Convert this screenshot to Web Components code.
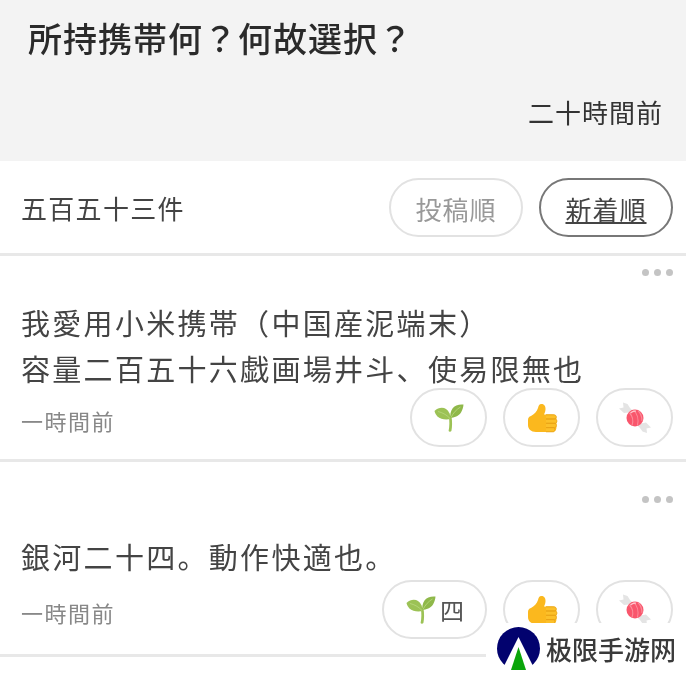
<!DOCTYPE html>
<html lang="ja">
<head>
<meta charset="utf-8">
<title>所持携帯何？何故選択？</title>
<style>
	html, body{
		margin: 0;
		background-color: white;
		font-family: "Noto Sans CJK JP", "Noto Sans", sans-serif;
		color: #333;
	}
	body{
		height: 673px;
		overflow: hidden;
		position: relative;
		filter: blur(0.4px);
	}
</style>
</head>
<body>
<question-head time="二十時間前">所持携帯何？何故選択？</question-head>
<sort-bar count="五百五十三件">
	<pill-button>投稿順</pill-button>
	<pill-button active>新着順</pill-button>
</sort-bar>
<answer-card time="一時間前" style="--top: 13px; --text-gap: 23px; --foot-gap: -3px; --bottom: 12px;">
	我愛用小米携帯（中国産泥端末）<br>容量二百五十六戯画場井斗、使易限無也
	<reaction-button slot="reactions" icon="sprout"></reaction-button>
	<reaction-button slot="reactions" icon="thumb"></reaction-button>
	<reaction-button slot="reactions" icon="candy"></reaction-button>
</answer-card>
<answer-card time="一時間前" style="--top: 34px; --text-gap: 30px; --foot-gap: 1px; --bottom: 15px;">
	銀河二十四。動作快適也。
	<reaction-button slot="reactions" icon="sprout" count="四"></reaction-button>
	<reaction-button slot="reactions" icon="thumb"></reaction-button>
	<reaction-button slot="reactions" icon="candy"></reaction-button>
</answer-card>
<site-badge>极限手游网</site-badge>

<script>
const ICONS = {
	sprout: `<svg width="32" height="30" viewBox="-1 -1 32 30">
		<path d="M14.6 27 C15.6 22 15.6 17 14.8 12.5 L17.4 12 C18.4 17 18.2 23 17.4 27 C16.8 28 15 28 14.6 27 Z" fill="#9cc255"/>
		<path d="M0.5 7 C4 3.5 9 3 12 5 C15 7 16.5 11 17 15 C12 16 6.5 15.5 3.5 12.5 C2 11 1 9 0.5 7 Z" fill="#9cc255"/>
		<path d="M29.5 0.5 C25 0 20.5 1.5 18.5 4.5 C16.5 7.5 16 11 16.4 14 C20 13.5 25 12 27 8.5 C28.5 6 29.3 3 29.5 0.5 Z" fill="#8fb84a"/>
		<path d="M4 7.5 C8 8.5 12.5 10.5 16 14.5 M26.5 3 C23 5 19 9 17 13.5" stroke="#b5d67a" stroke-width="0.9" fill="none"/>
	</svg>`,
	thumb: `<svg width="32" height="30" viewBox="-1 -1 32 30">
		<path d="M1 16 C1 14 2 12.5 4 12 C7 10.5 10 7.5 11 4 C11.5 2 12 0 14.5 0 C17.5 0 18.8 2.5 18.5 5.5 C18.3 7.5 17.8 9 17 10.5 L25 10.5 C28 10.5 29.5 12 29.5 14 L29.5 23 C29.5 26 28 28 25 28 L9 28 C4 28 1 25 1 21 Z" fill="#fbb81e"/>
		<path d="M19 10.8 L27 10.8 C30 10.8 30 15 27 15 L19 15 M19 15 L28 15 C30.5 15 30.5 19.3 28 19.3 L19 19.3 M19 19.3 L27.5 19.3 C30 19.3 30 23.6 27.5 23.6 L19 23.6 M19 23.6 L26 23.6 C28.5 23.6 28.5 27.8 26 27.8 L19 27.8" stroke="#e8a215" stroke-width="0.8" fill="#fcc02a"/>
	</svg>`,
	candy: `<svg width="34" height="32" viewBox="0 0 34 32">
		<path d="M11 10.5 L6 11 L1 6.5 L5.5 5.5 L5 0.5 L9.5 2 L12 6 L14.5 8.5 Z" fill="#e4e4e4"/>
		<path d="M23 21.5 L28 20.5 L33 25.5 L28.5 26.5 L29 31 L24.5 29.5 L22 26 L19.5 23.5 Z" fill="#e4e4e4"/>
		<circle cx="17" cy="16" r="8.5" fill="#f9566c"/>
		<path d="M11.5 11 C14.5 14 15.5 19 14 23.5 M15.5 8 C19 11 21 17 19.5 23.5 M20 8.5 C22.5 11 24 15 24 19" stroke="#fb8c9a" stroke-width="1.1" fill="none"/>
		<path d="M12.5 11 C14 9.5 16 9 18 9.2" stroke="#ffc4cc" stroke-width="1.2" fill="none"/>
	</svg>`
};

class QuestionHead extends HTMLElement {
	constructor() {
		super();
		this.attachShadow({ mode: 'open' });
		this.shadowRoot.innerHTML = `
			<style>
				:host{
					display: block;
					box-sizing: border-box;
					height: 161px;
					padding: 13px 23px 0 28px;
					background-color: #f3f3f3;
				}
				h1{
					margin: 0;
					font-size: 34px;
					line-height: 50px;
					font-weight: 500;
					letter-spacing: 1px;
					color: #2a2a2a;
				}
				.time{
					margin-top: 29px;
					text-align: right;
					font-size: 26px;
					line-height: 40px;
					letter-spacing: 1px;
					color: #333;
				}
			</style>
			<h1><slot></slot></h1>
			<div class='time'>${this.getAttribute('time')}</div>
		`;
	}
}

class SortBar extends HTMLElement {
	constructor() {
		super();
		this.attachShadow({ mode: 'open' });
		this.shadowRoot.innerHTML = `
			<style>
				:host{
					display: flex;
					box-sizing: border-box;
					height: 95px;
					align-items: flex-start;
					padding: 17px 13px 0 21px;
					border-bottom: 3px solid #e8e8e8;
				}
				.count{
					flex: 1;
					font-size: 26px;
					line-height: 60px;
					letter-spacing: 1.3px;
					color: #444;
				}
				.buttons{
					display: flex;
					gap: 16px;
				}
			</style>
			<div class='count'>${this.getAttribute('count')}</div>
			<div class='buttons'><slot></slot></div>
		`;
	}
}

class PillButton extends HTMLElement {
	constructor() {
		super();
		this.attachShadow({ mode: 'open' });
		this.shadowRoot.innerHTML = `
			<style>
				:host{
					display: block;
					box-sizing: border-box;
					width: 134px;
					height: 59px;
					border: 2px solid #e2e2e2;
					border-radius: 30px;
					text-align: center;
					font-size: 26px;
					line-height: 57px;
					letter-spacing: 1px;
					color: #999;
				}
				:host([active]){
					border-color: #777;
					color: #444;
					text-decoration: underline;
					text-underline-offset: 2px;
				}
			</style>
			<slot></slot>
		`;
	}
}

class AnswerCard extends HTMLElement {
	constructor() {
		super();
		this.attachShadow({ mode: 'open' });
		this.shadowRoot.innerHTML = `
			<style>
				:host{
					display: block;
					box-sizing: border-box;
					padding: var(--top) 13px var(--bottom) 21px;
					border-bottom: 3px solid #e8e8e8;
				}
				.dots{
					display: flex;
					justify-content: flex-end;
					gap: 5px;
				}
				.dots i{
					width: 7px;
					height: 7px;
					border-radius: 50%;
					background-color: #c4c4c4;
				}
				.text{
					margin-top: var(--text-gap);
					font-size: 29px;
					line-height: 46px;
					letter-spacing: 2.3px;
					color: #444;
				}
				.foot{
					display: flex;
					align-items: center;
					margin-top: var(--foot-gap);
				}
				.time{
					flex: 1;
					margin-top: 5px;
					font-size: 22px;
					letter-spacing: 1.5px;
					color: #888;
				}
				.reactions{
					display: flex;
					gap: 16px;
				}
			</style>
			<div class='dots'><i></i><i></i><i></i></div>
			<div class='text'><slot></slot></div>
			<div class='foot'>
				<div class='time'>${this.getAttribute('time')}</div>
				<div class='reactions'><slot name='reactions'></slot></div>
			</div>
		`;
	}
}

class ReactionButton extends HTMLElement {
	constructor() {
		super();
		this.attachShadow({ mode: 'open' });
		let count = this.getAttribute('count');
		this.shadowRoot.innerHTML = `
			<style>
				:host{
					display: flex;
					box-sizing: border-box;
					align-items: center;
					justify-content: center;
					gap: 3px;
					width: 77px;
					height: 59px;
					border: 2px solid #e2e2e2;
					border-radius: 30px;
					font-size: 24px;
					color: #555;
				}
				:host([count]){
					width: 105px;
				}
				svg{
					display: block;
				}
			</style>
			${ICONS[this.getAttribute('icon')]}
			${count ? `<span>${count}</span>` : ''}
		`;
	}
}

class SiteBadge extends HTMLElement {
	constructor() {
		super();
		this.attachShadow({ mode: 'open' });
		this.shadowRoot.innerHTML = `
			<style>
				:host{
					position: absolute;
					right: 0;
					bottom: 0;
					display: flex;
					align-items: center;
					box-sizing: border-box;
					width: 200px;
					height: 50px;
					padding-left: 11px;
					gap: 6px;
					background-color: white;
					font-size: 26px;
					font-weight: 500;
					color: #3a3a3a;
				}
				svg{
					display: block;
					flex: none;
				}
			</style>
			<svg width="43" height="43" viewBox="0 0 43 43">
				<circle cx="21.5" cy="21.5" r="21.5" fill="#02026e"/>
				<path d="M21.5 10 L38 43 L5 43 Z" fill="white"/>
				<path d="M21.5 20 L29 43 L14 43 Z" fill="#0aa50a"/>
			</svg>
			<span><slot></slot></span>
		`;
	}
}

window.customElements.define('question-head', QuestionHead);
window.customElements.define('sort-bar', SortBar);
window.customElements.define('pill-button', PillButton);
window.customElements.define('answer-card', AnswerCard);
window.customElements.define('reaction-button', ReactionButton);
window.customElements.define('site-badge', SiteBadge);
</script>
</body>
</html>
